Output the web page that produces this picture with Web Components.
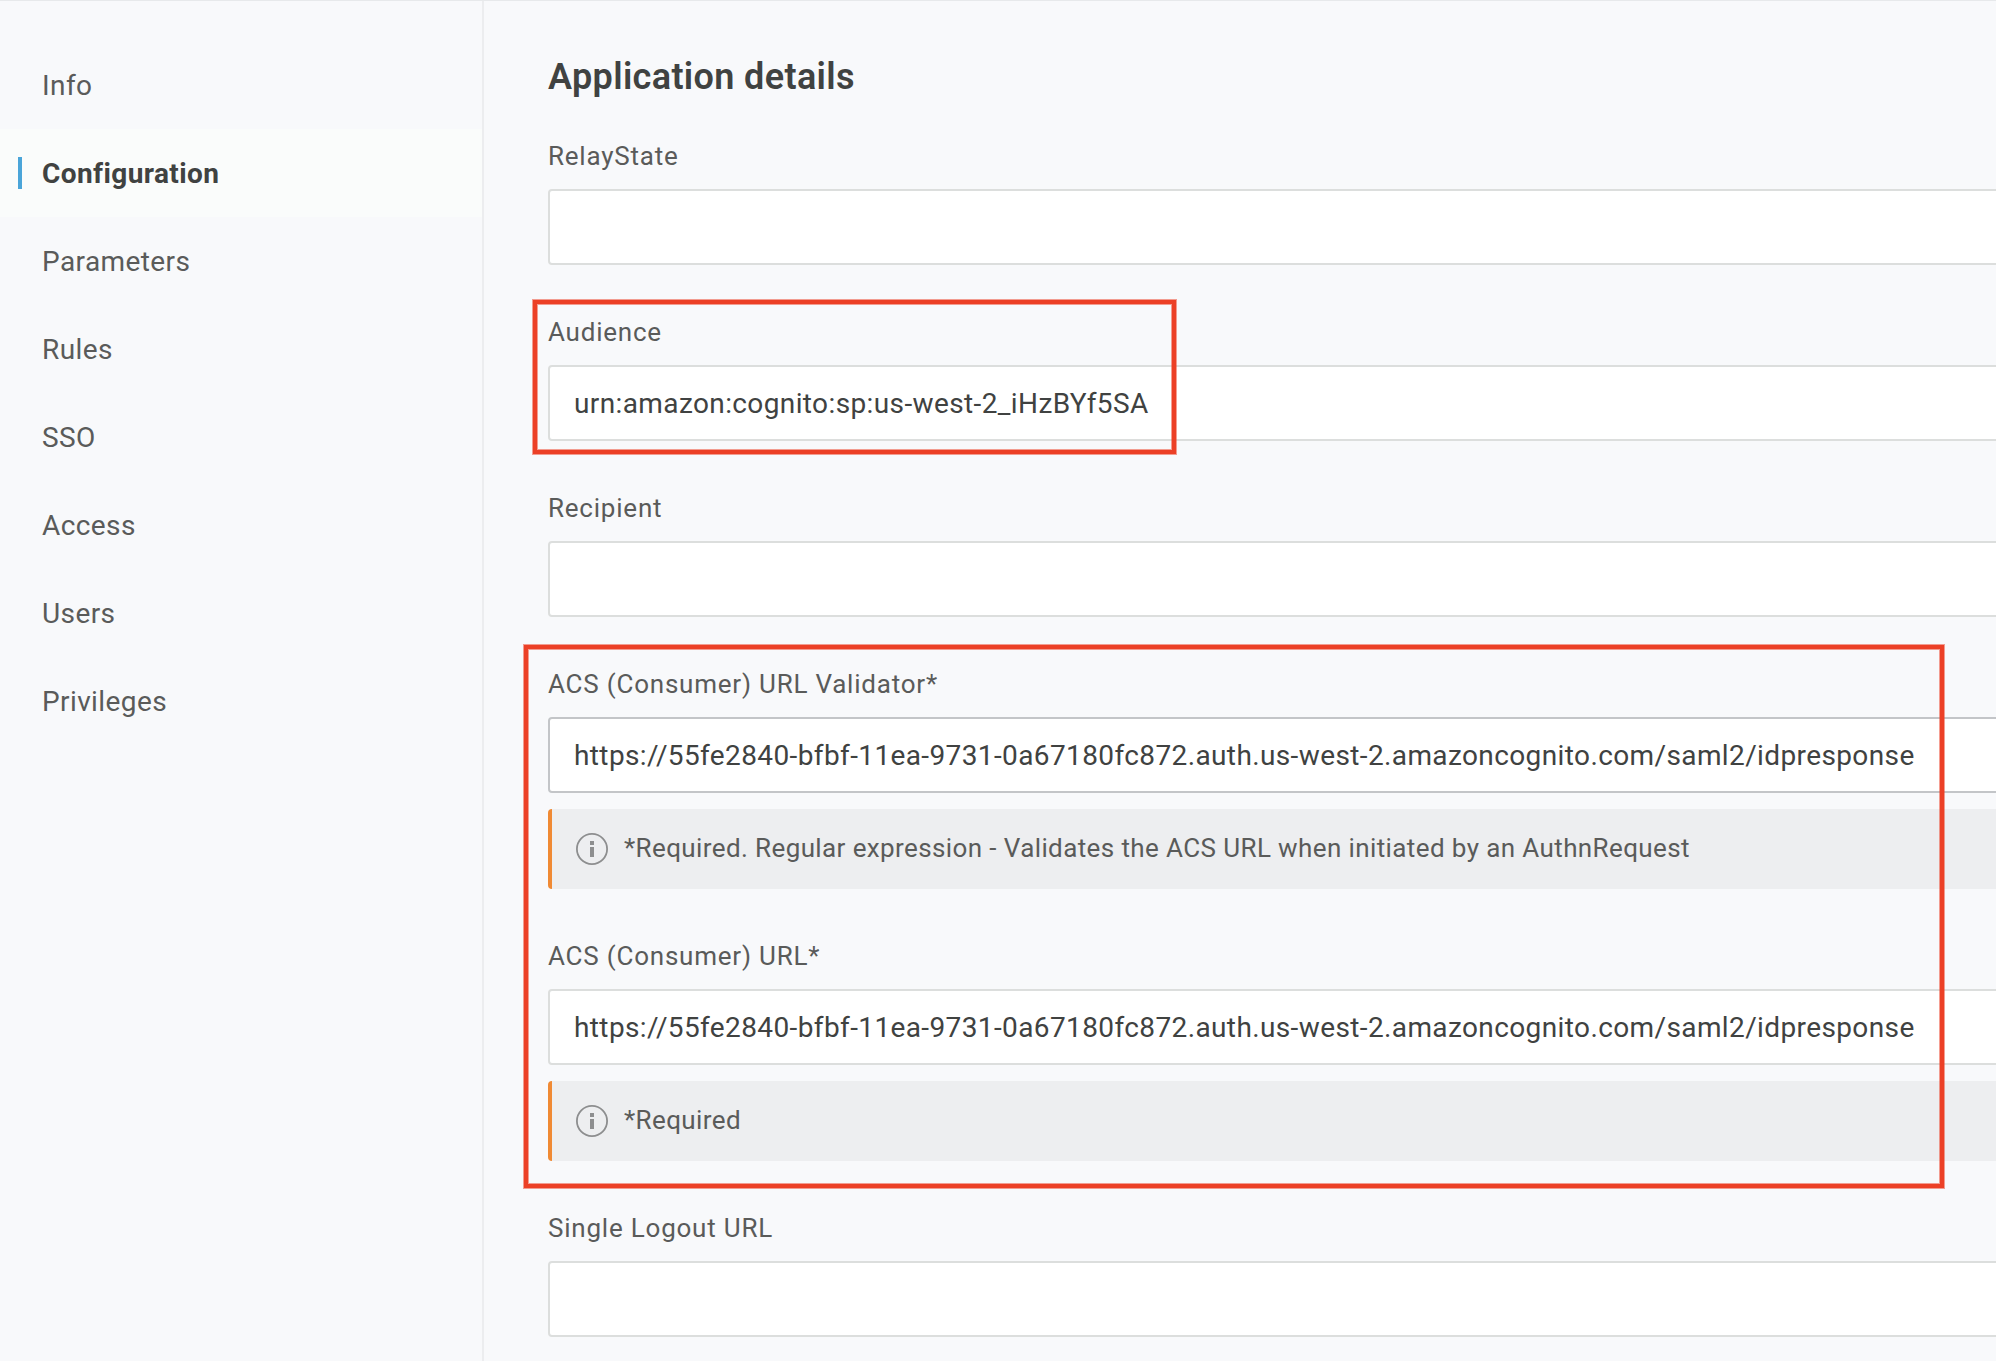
<!DOCTYPE html>
<html lang="en">
<head>
<meta charset="utf-8">
<title>Application details</title>
<style>
  html, body { margin: 0; height: 100%; overflow: hidden; }
  body { background: #f8f9fb; font-family: Roboto, "Liberation Sans", sans-serif; color: #5a5b5a; }
</style>
</head>
<body>
<app-shell>
  <side-nav slot="nav">
    <nav-item>Info</nav-item>
    <nav-item active>Configuration</nav-item>
    <nav-item>Parameters</nav-item>
    <nav-item>Rules</nav-item>
    <nav-item>SSO</nav-item>
    <nav-item>Access</nav-item>
    <nav-item>Users</nav-item>
    <nav-item>Privileges</nav-item>
  </side-nav>
  <form-section heading="Application details">
    <text-field label="RelayState"></text-field>
    <highlight-frame style="--t:-16px;--l:-15px;--b:-13px;--w:643px">
      <text-field label="Audience">urn:amazon:cognito:sp:us-west-2_iHzBYf5SA</text-field>
    </highlight-frame>
    <text-field label="Recipient"></text-field>
    <highlight-frame style="--t:-23px;--l:-24px;--b:-27px;--w:1420px">
      <text-field label="ACS (Consumer) URL Validator*" hovered>https://55fe2840-bfbf-11ea-9731-0a67180fc872.auth.us-west-2.amazoncognito.com/saml2/idpresponse<field-note slot="note">*Required. Regular expression - Validates the ACS URL when initiated by an AuthnRequest</field-note></text-field>
      <text-field label="ACS (Consumer) URL*">https://55fe2840-bfbf-11ea-9731-0a67180fc872.auth.us-west-2.amazoncognito.com/saml2/idpresponse<field-note slot="note">*Required</field-note></text-field>
    </highlight-frame>
    <text-field label="Single Logout URL"></text-field>
  </form-section>
</app-shell>
<script>
const define = (name, html, setup) => customElements.define(name, class extends HTMLElement {
  connectedCallback() {
    if (this.shadowRoot) return;
    const root = this.attachShadow({ mode: 'open' });
    root.innerHTML = html;
    if (setup) setup(this, root);
  }
});

define('app-shell', `
<style>
  :host { display: flex; box-sizing: border-box; height: 100vh; overflow: hidden; border-top: 1px solid #e7e9eb; }
  main { flex: 1; min-width: 0; padding: 56px 0 0 64px; }
</style>
<slot name="nav"></slot><main><slot></slot></main>`);

define('side-nav', `
<style>
  :host { display: block; box-sizing: border-box; flex: 0 0 484px; border-right: 2px solid #ecedef; }
  nav { display: flex; flex-direction: column; padding-top: 40px; }
</style>
<nav><slot></slot></nav>`);

define('nav-item', `
<style>
  :host { display: flex; align-items: center; height: 88px; padding-left: 18px; font-size: 28px; letter-spacing: .4px; }
  span { box-sizing: border-box; height: 32px; border-left: 4px solid transparent; padding-left: 20px; line-height: 34px; }
  :host([active]) { background: #fafcfb; color: #404241; font-weight: 700; }
  :host([active]) span { border-color: #4aa5d9; }
</style>
<span><slot></slot></span>`);

define('form-section', `
<style>
  :host { display: block; }
  h2 { margin: 0 0 43px; font-size: 36px; line-height: 40px; font-weight: 600; letter-spacing: .36px; color: #404241; }
  .fields { display: flex; flex-direction: column; gap: 51px; margin-right: -20px; }
</style>
<h2></h2><div class="fields"><slot></slot></div>`,
(el, root) => { root.querySelector('h2').textContent = el.getAttribute('heading'); });

define('highlight-frame', `
<style>
  :host { position: relative; display: flex; flex-direction: column; gap: 51px; }
  i { position: absolute; top: var(--t); left: var(--l); bottom: var(--b); width: var(--w); box-sizing: border-box;
      border: 4px solid #ec4026; box-shadow: 0 0 0 1px rgba(236,64,38,.5), inset 0 0 0 1px rgba(236,64,38,.5); pointer-events: none; }
</style>
<slot></slot><i></i>`);

define('text-field', `
<style>
  :host { display: flex; flex-direction: column; }
  label { margin-bottom: 17px; font-size: 26px; line-height: 32px; letter-spacing: .03em; }
  .box { display: flex; align-items: center; box-sizing: border-box; height: 76px; padding-left: 24px;
         background: #fff; border: 2px solid #dcdedd; border-radius: 4px; color: #404241;
         font-size: 28px; letter-spacing: .385px; white-space: nowrap; }
  :host([hovered]) .box { border-color: #c3c5c8; }
</style>
<label></label><div class="box"><span><slot></slot></span></div><slot name="note"></slot>`,
(el, root) => { root.querySelector('label').textContent = el.getAttribute('label'); });

define('field-note', `
<style>
  :host { display: flex; align-items: center; box-sizing: border-box; height: 80px; margin-top: 16px; padding-left: 24px;
          gap: 16px; background: #edeef0; border-left: 4px solid #f08a34; border-radius: 4px;
          font-size: 26px; letter-spacing: .015em; white-space: nowrap; }
  svg { flex: none; width: 32px; height: 32px; }
  span { line-height: 32px; padding-bottom: 2px; }
</style>
<svg viewBox="0 0 32 32"><circle cx="16" cy="16" r="15.1" fill="none" stroke="#8d8e8f" stroke-width="1.8"/><path d="M14 8h4v4h-4zM14 14h4v10h-4z" fill="#8d8e8f"/></svg>
<span><slot></slot></span>`);
</script>
</body>
</html>
